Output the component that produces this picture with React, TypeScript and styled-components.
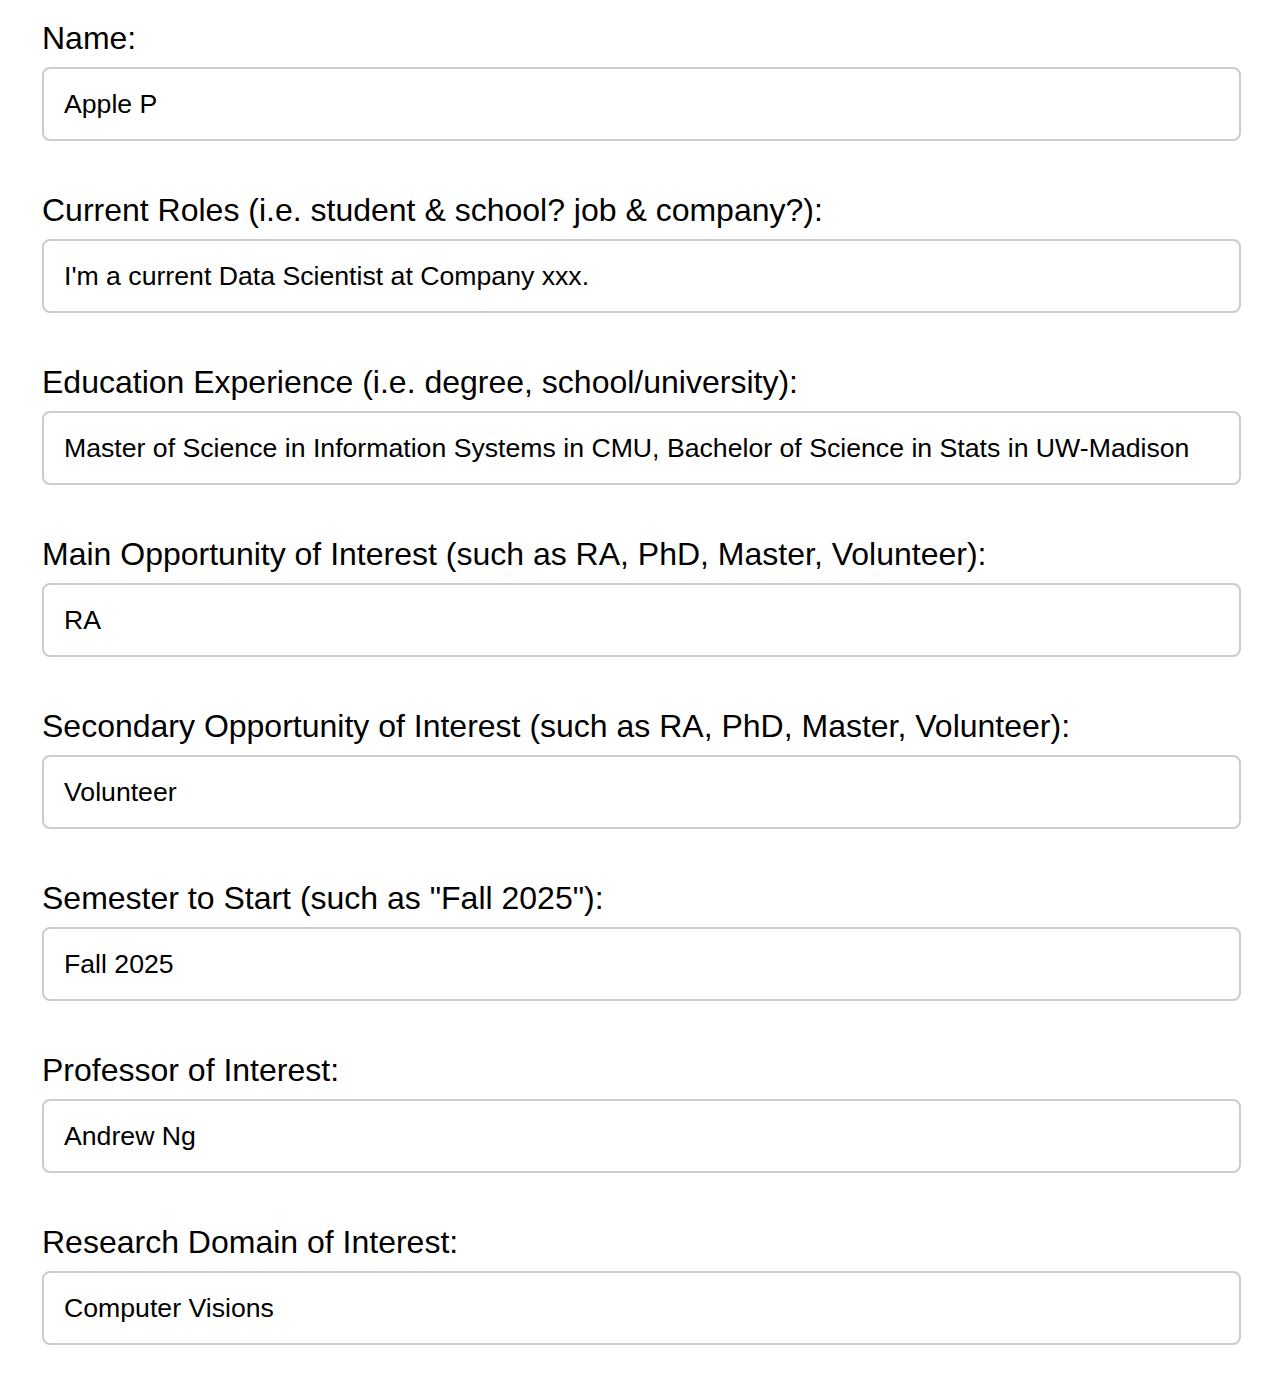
import styled, { createGlobalStyle } from "styled-components";

const GlobalStyle = createGlobalStyle`
  html, body {
    margin: 0;
    padding: 0;
    background: #ffffff;
  }
`;

const fields = [
  { label: "Name:", value: "Apple P" },
  {
    label: "Current Roles (i.e. student & school? job & company?):",
    value: "I'm a current Data Scientist at Company xxx.",
  },
  {
    label: "Education Experience (i.e. degree, school/university):",
    value:
      "Master of Science in Information Systems in CMU, Bachelor of Science in Stats in UW-Madison",
  },
  {
    label: "Main Opportunity of Interest (such as RA, PhD, Master, Volunteer):",
    value: "RA",
  },
  {
    label:
      "Secondary Opportunity of Interest (such as RA, PhD, Master, Volunteer):",
    value: "Volunteer",
  },
  { label: 'Semester to Start (such as "Fall 2025"):', value: "Fall 2025" },
  { label: "Professor of Interest:", value: "Andrew Ng" },
  { label: "Research Domain of Interest:", value: "Computer Visions" },
];

export default function App() {
  return (
    <>
      <GlobalStyle />
      <Form>
        {fields.map((field) => (
          <FieldGroup key={field.label}>
            <Label>{field.label}</Label>
            <Input type="text" defaultValue={field.value} readOnly />
          </FieldGroup>
        ))}
      </Form>
    </>
  );
}

const Form = styled.form`
  display: flex;
  flex-direction: column;
  gap: 51px;

  padding: 20px 29px 40px 42px;

  font-family: "Liberation Sans", Arial, sans-serif;
`;

const FieldGroup = styled.div`
  display: flex;
  flex-direction: column;
  gap: 10px;
`;

const Label = styled.label`
  font-size: 32px;
  line-height: 37px;
  color: #000000;
`;

const Input = styled.input`
  box-sizing: border-box;
  width: 100%;
  height: 74px;

  padding: 0 20px;

  font-family: "Liberation Sans", Arial, sans-serif;
  font-size: 26.67px;
  color: #000000;

  background-color: #ffffff;
  border: 2px solid #cccccc;
  border-radius: 8px;
  outline: none;
`;
